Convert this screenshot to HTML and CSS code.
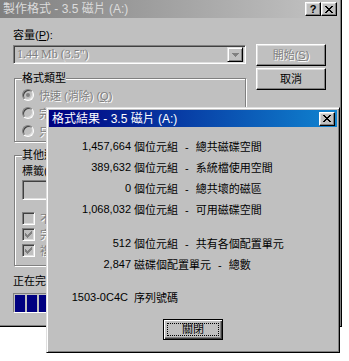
FILE: index.html
```html
<!DOCTYPE html>
<html lang="zh-Hant">
<head>
<meta charset="utf-8">
<title>格式結果</title>
<link rel="stylesheet" href="styles.css">
</head>
<body>
<div class="desktop">
  <div class="window back">
    <div class="titlebar inactive">
      <span class="title">製作格式 - 3.5 磁片 (A:)</span>
      <div class="tbtns">
        <span class="tbtn help">?</span>
        <span class="tbtn"><svg width="8" height="7" viewBox="0 0 8 7" shape-rendering="crispEdges"><path d="M0 0h2v1h-2zM6 0h2v1h-2zM1 1h2v1h-2zM5 1h2v1h-2zM2 2h4v1h-4zM3 3h2v1h-2zM2 4h4v1h-4zM1 5h2v1h-2zM5 5h2v1h-2zM0 6h2v1h-2zM6 6h2v1h-2z" fill="#000"/></svg></span>
      </div>
    </div>
    <div class="back-body">
      <div class="top">
        <div class="leftcol">
          <div class="lbl">容量(<u>P</u>):</div>
          <div class="combo">
            <span class="combo-text">1.44 Mb (3.5")</span>
            <span class="combo-btn"><svg width="7" height="4" viewBox="0 0 7 4" shape-rendering="crispEdges"><path d="M0 0h7v1h-1v1h-1v1h-1v1h-1v-1h-1v-1h-1v-1h-1z" fill="#808080"/></svg></span>
          </div>
          <fieldset class="group g1">
            <legend>格式類型</legend>
            <div class="opt"><span class="radio on"></span><span class="dis">快速 (消除) (<u>Q</u>)</span></div>
            <div class="opt"><span class="radio"></span><span class="dis">完整(<u>F</u>)</span></div>
            <div class="opt"><span class="radio"></span><span class="dis">只複製系統檔(<u>Y</u>)</span></div>
          </fieldset>
        </div>
        <div class="btncol">
          <div class="btn"><span class="dis">開始(<u>S</u>)</span></div>
          <div class="btn">取消</div>
        </div>
      </div>
      <fieldset class="group g2">
        <legend>其他選項</legend>
        <div class="lbl">標籤(<u>L</u>):</div>
        <div class="textbox"></div>
        <div class="checks">
          <div class="opt"><span class="check"></span><span class="dis">不要標籤(<u>N</u>)</span></div>
          <div class="opt"><span class="check"><svg width="7" height="7" viewBox="0 0 7 7" shape-rendering="crispEdges"><path d="M0 2h1v1h1v1h1v-1h1v-1h1v-1h1v-1h1v3h-1v1h-1v1h-1v1h-1v1h-1v-1h-1v-1h-1z" fill="#808080"/></svg></span><span class="dis">完成時顯示摘要(<u>D</u>)</span></div>
          <div class="opt"><span class="check"><svg width="7" height="7" viewBox="0 0 7 7" shape-rendering="crispEdges"><path d="M0 2h1v1h1v1h1v-1h1v-1h1v-1h1v-1h1v3h-1v1h-1v1h-1v1h-1v1h-1v-1h-1v-1h-1z" fill="#808080"/></svg></span><span class="dis">複製系統檔(<u>M</u>)</span></div>
        </div>
      </fieldset>
      <div class="status">正在完成格式化...</div>
      <div class="progress">
        <span class="blk"></span><span class="blk"></span><span class="blk"></span><span class="blk"></span><span class="blk"></span><span class="blk"></span><span class="blk"></span><span class="blk"></span><span class="blk"></span><span class="blk"></span>
      </div>
    </div>
  </div>

  <div class="window front">
    <div class="titlebar active">
      <span class="title">格式結果 - 3.5 磁片 (A:)</span>
      <div class="tbtns">
        <span class="tbtn"><svg width="8" height="7" viewBox="0 0 8 7" shape-rendering="crispEdges"><path d="M0 0h2v1h-2zM6 0h2v1h-2zM1 1h2v1h-2zM5 1h2v1h-2zM2 2h4v1h-4zM3 3h2v1h-2zM2 4h4v1h-4zM1 5h2v1h-2zM5 5h2v1h-2zM0 6h2v1h-2zM6 6h2v1h-2z" fill="#000"/></svg></span>
      </div>
    </div>
    <div class="front-body">
      <div class="row"><span class="num">1,457,664</span><span class="desc">個位元組 - 總共磁碟空間</span></div>
      <div class="row"><span class="num">389,632</span><span class="desc">個位元組 - 系統檔使用空間</span></div>
      <div class="row"><span class="num">0</span><span class="desc">個位元組 - 總共壞的磁區</span></div>
      <div class="row"><span class="num">1,068,032</span><span class="desc">個位元組 - 可用磁碟空間</span></div>
      <div class="row sep"><span class="num">512</span><span class="desc">個位元組 - 共有各個配置單元</span></div>
      <div class="row"><span class="num">2,847</span><span class="desc">磁碟個配置單元 - 總數</span></div>
      <div class="row sep"><span class="num serial">1503-0C4C</span><span class="desc">序列號碼</span></div>
      <div class="btn default"><span class="focus">關閉</span></div>
    </div>
  </div>
</div>
</body>
</html>
```
FILE: styles.css
```css
* { box-sizing: border-box; }
html, body { margin: 0; padding: 0; }
body {
  background: #fff;
  font-family: "Liberation Sans", "Noto Sans CJK TC", sans-serif;
  font-size: 11px;
  color: #000;
}
.desktop { position: relative; width: 349px; height: 361px; overflow: hidden; }

.window {
  position: absolute;
  background: #c0c0c0;
  border: 1px solid;
  border-color: #dfdfdf #000 #000 #dfdfdf;
  box-shadow: inset 1px 1px #fff, inset -1px -1px #808080;
  padding: 2px;
  display: flex;
  flex-direction: column;
}
.back { left: -3px; top: -3px; width: 345px; height: 330px; }
.front { left: 46px; top: 107px; width: 294px; height: 246px; }

.titlebar {
  display: flex;
  align-items: center;
  padding: 0 2px 0 3px;
  flex: none;
}
.back .titlebar { height: 18px; }
.front .titlebar { height: 17px; }
.inactive { background: linear-gradient(90deg, #808080, #c4c4c4); }
.active { background: linear-gradient(90deg, #000080, #1084d0); }
.title {
  font-size: 12px;
  line-height: 14px;
  white-space: nowrap;
  color: #fff;
}
.inactive .title { color: #dcdcdc; }
.tbtns { margin-left: auto; display: flex; }
.tbtn {
  width: 16px;
  height: 14px;
  background: #c0c0c0;
  border: 1px solid;
  border-color: #fff #000 #000 #fff;
  box-shadow: inset -1px -1px #808080, inset 1px 1px #dfdfdf;
  display: flex;
  align-items: center;
  justify-content: center;
}
.help { font-weight: bold; font-size: 11px; line-height: 12px; color: #000; }

/* back dialog */
.back-body { padding: 11px 13px 0 13px; display: flex; flex-direction: column; }
.top { display: flex; gap: 10px; }
.leftcol { width: 233px; display: flex; flex-direction: column; }
.lbl { line-height: 13px; white-space: nowrap; }
.combo {
  margin-top: 3px;
  height: 19px;
  border: 1px solid;
  border-color: #808080 #fff #fff #808080;
  box-shadow: inset 1px 1px #404040, inset -1px -1px #dfdfdf;
  background: #c0c0c0;
  display: flex;
  align-items: center;
  padding: 2px 2px 2px 3px;
}
.combo-text {
  font-family: "Liberation Serif", "Noto Sans CJK TC", serif;
  font-size: 12px;
  color: #808080;
  text-shadow: 1px 1px #fff;
  flex: 1;
}
.combo-btn {
  width: 16px;
  height: 15px;
  background: #c0c0c0;
  border: 1px solid;
  border-color: #dfdfdf #000 #000 #dfdfdf;
  box-shadow: inset 1px 1px #fff, inset -1px -1px #808080;
  display: flex;
  align-items: center;
  justify-content: center;
}
.btncol { margin-top: 15px; display: flex; flex-direction: column; gap: 2px; }
.btn {
  width: 70px;
  height: 22px;
  background: #c0c0c0;
  border: 1px solid;
  border-color: #fff #000 #000 #fff;
  box-shadow: inset -1px -1px #808080, inset 1px 1px #dfdfdf;
  display: flex;
  align-items: center;
  justify-content: center;
  line-height: 13px;
}
.dis { color: #808080; text-shadow: 1px 1px #fff; white-space: nowrap; }

.group {
  margin: 0 0 0 1px;
  width: 232px;
  border: 1px solid #808080;
  box-shadow: inset 1px 1px #fff, 1px 1px #fff;
  padding: 1px 7px 1px 7px;
  min-width: 0;
}
.group legend {
  padding: 0;
  line-height: 13px;
  background: #c0c0c0;
  white-space: nowrap;
}
.g1 { margin-top: 8px; }
.g2 { margin-top: 7px; padding-top: 3px; padding-bottom: 7px; }
.opt { display: flex; align-items: center; gap: 5px; height: 18px; white-space: nowrap; }
.radio {
  width: 12px;
  height: 12px;
  border-radius: 50%;
  border: 1px solid;
  border-color: #808080 #fff #fff #808080;
  box-shadow: inset 1px 1px #404040, inset -1px -1px #dfdfdf;
  background: #c0c0c0;
  display: flex;
  align-items: center;
  justify-content: center;
  flex: none;
}
.radio.on::after {
  content: "";
  width: 4px;
  height: 4px;
  border-radius: 50%;
  background: #808080;
}
.textbox {
  margin-top: 2px;
  width: 200px;
  height: 20px;
  border: 1px solid;
  border-color: #808080 #fff #fff #808080;
  box-shadow: inset 1px 1px #404040, inset -1px -1px #dfdfdf;
  background: #c0c0c0;
}
.checks { margin-top: 10px; }
.checks .opt { height: 16px; }
.check {
  width: 13px;
  height: 13px;
  border: 1px solid;
  border-color: #808080 #fff #fff #808080;
  box-shadow: inset 1px 1px #404040, inset -1px -1px #dfdfdf;
  background: #c0c0c0;
  display: flex;
  align-items: center;
  justify-content: center;
  flex: none;
}
.status { margin-top: 9px; line-height: 13px; white-space: nowrap; }
.progress {
  margin-top: 5px;
  height: 20px;
  width: 313px;
  border: 1px solid;
  border-color: #808080 #fff #fff #808080;
  padding: 1px;
  display: flex;
  gap: 2px;
}
.blk { width: 10px; height: 17px; background: #000080; }

/* front dialog */
.front-body { padding-top: 8.5px; display: flex; flex-direction: column; }
.row { display: flex; align-items: center; height: 21px; white-space: nowrap; }
.row.sep { margin-top: 12.5px; }
.num { width: 82px; text-align: right; flex: none; }
.serial { padding-right: 3px; }
.desc { margin-left: 3px; word-spacing: 4px; }
.btn.default {
  margin: 11.5px auto 0;
  width: 60px;
  height: 21px;
  border-color: #000;
  box-shadow: inset 1px 1px #fff, inset -1px -1px #404040, inset -2px -2px #808080;
  padding: 3px;
}
.focus {
  flex: 1;
  align-self: stretch;
  display: flex;
  align-items: center;
  justify-content: center;
  border: 1px dotted #000;
}
```
